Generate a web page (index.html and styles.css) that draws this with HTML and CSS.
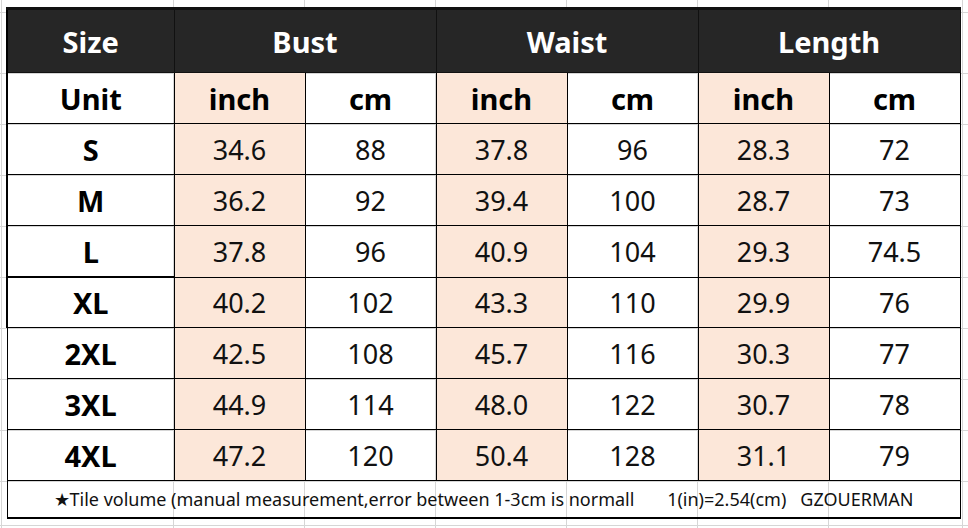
FILE: index.html
```html
<!DOCTYPE html>
<html>
<head>
<meta charset="utf-8">
<link rel="stylesheet" href="styles.css">
</head>
<body>
<div class="sheet">
<table class="size-table">
  <colgroup>
    <col class="c-size"><col class="c-val"><col class="c-val"><col class="c-val"><col class="c-val"><col class="c-val"><col class="c-val">
  </colgroup>
  <thead>
    <tr class="head">
      <th>Size</th><th colspan="2">Bust</th><th colspan="2">Waist</th><th colspan="2">Length</th>
    </tr>
  </thead>
  <tbody>
    <tr class="unit">
      <td class="lab">Unit</td><td class="in">inch</td><td>cm</td><td class="in">inch</td><td>cm</td><td class="in">inch</td><td>cm</td>
    </tr>
    <tr><td class="lab">S</td><td class="in">34.6</td><td>88</td><td class="in">37.8</td><td>96</td><td class="in">28.3</td><td>72</td></tr>
    <tr><td class="lab">M</td><td class="in">36.2</td><td>92</td><td class="in">39.4</td><td>100</td><td class="in">28.7</td><td>73</td></tr>
    <tr><td class="lab">L</td><td class="in">37.8</td><td>96</td><td class="in">40.9</td><td>104</td><td class="in">29.3</td><td>74.5</td></tr>
    <tr class="row-xl"><td class="lab lab-xl">XL</td><td class="in">40.2</td><td>102</td><td class="in">43.3</td><td>110</td><td class="in">29.9</td><td>76</td></tr>
    <tr><td class="lab lab-thin">2XL</td><td class="in">42.5</td><td>108</td><td class="in">45.7</td><td>116</td><td class="in">30.3</td><td>77</td></tr>
    <tr><td class="lab lab-thin">3XL</td><td class="in">44.9</td><td>114</td><td class="in">48.0</td><td>122</td><td class="in">30.7</td><td>78</td></tr>
    <tr><td class="lab lab-thin">4XL</td><td class="in">47.2</td><td>120</td><td class="in">50.4</td><td>128</td><td class="in">31.1</td><td>79</td></tr>
    <tr class="note"><td colspan="7" class="note-cell">★Tile volume (manual measurement,error between 1-3cm is normall       1(in)=2.54(cm)   GZOUERMAN</td></tr>
  </tbody>
</table>
</div>
</body>
</html>
```

FILE: styles.css
```css
html, body {
  margin: 0;
  padding: 0;
}
body {
  width: 968px;
  height: 528px;
  overflow: hidden;
  background-color: #ffffff;
  background-image:
    linear-gradient(#d6d6d6, #d6d6d6),
    linear-gradient(#d6d6d6, #d6d6d6),
    linear-gradient(#d6d6d6, #d6d6d6),
    linear-gradient(#d6d6d6, #d6d6d6),
    linear-gradient(#d6d6d6, #d6d6d6),
    linear-gradient(#d6d6d6, #d6d6d6),
    linear-gradient(#d6d6d6, #d6d6d6),
    linear-gradient(#d6d6d6, #d6d6d6),
    linear-gradient(#d6d6d6, #d6d6d6),
    linear-gradient(#d6d6d6, #d6d6d6),
    linear-gradient(#d6d6d6, #d6d6d6),
    linear-gradient(#d6d6d6, #d6d6d6),
    linear-gradient(#d6d6d6, #d6d6d6),
    linear-gradient(#d6d6d6, #d6d6d6),
    linear-gradient(#d6d6d6, #d6d6d6),
    linear-gradient(#d6d6d6, #d6d6d6),
    linear-gradient(#d6d6d6, #d6d6d6),
    linear-gradient(#d6d6d6, #d6d6d6),
    linear-gradient(#d6d6d6, #d6d6d6);
  background-repeat: no-repeat;
  background-size:
    1px 528px, 1px 528px, 1px 528px, 1px 528px, 1px 528px, 1px 528px, 1px 528px, 1px 528px,
    968px 1px, 968px 1px, 968px 1px, 968px 1px, 968px 1px, 968px 1px, 968px 1px, 968px 1px, 968px 1px, 968px 1px, 968px 1px;
  background-position:
    1px 0, 173px 0, 304px 0, 435px 0, 566px 0, 697px 0, 828px 0, 962px 0,
    0 12px, 0 73px, 0 124px, 0 175px, 0 226px, 0 277px, 0 328px, 0 379px, 0 430px, 0 481px, 0 525px;
}
.sheet {
  padding: 7px 0 0 6px;
}
.size-table {
  border-collapse: collapse;
  table-layout: fixed;
  width: 954px;
  font-family: "Noto Sans", "Open Sans", sans-serif;
  color: #000;
}
.c-size { width: 167px; }
.c-val { width: 131px; }
.size-table th,
.size-table td {
  border: 1px solid #000;
  text-align: center;
  vertical-align: middle;
  padding: 0;
  line-height: 1;
}
.size-table .head th {
  height: 62px;
  background: #262626;
  color: #fff;
  font-size: 29px;
  font-weight: 700;
  border-top: 3px solid #000;
  border-color: #111;
}
.size-table .head th:first-child { border-left: 2px solid #000; }
.size-table td {
  height: 50px;
  font-size: 27px;
  font-weight: 400;
  color: #111;
}
.size-table .row-xl td { height: 49px; }
.size-table .unit td {
  font-weight: 700;
  font-size: 29px;
  color: #000;
}
.size-table td.lab {
  font-weight: 700;
  font-size: 29px;
  color: #000;
  border-left: 2px solid #000;
}
.size-table td.lab-xl { border-top: 2px solid #000; }
.size-table td.lab-thin { border-left: 1px solid #000; }
.size-table td.in {
  background: #fce7d9;
}
.size-table td.note-cell {
  height: 36px;
  font-size: 18px;
  white-space: pre;
  color: #111;
  border-bottom: 2px solid #000;
}
```
